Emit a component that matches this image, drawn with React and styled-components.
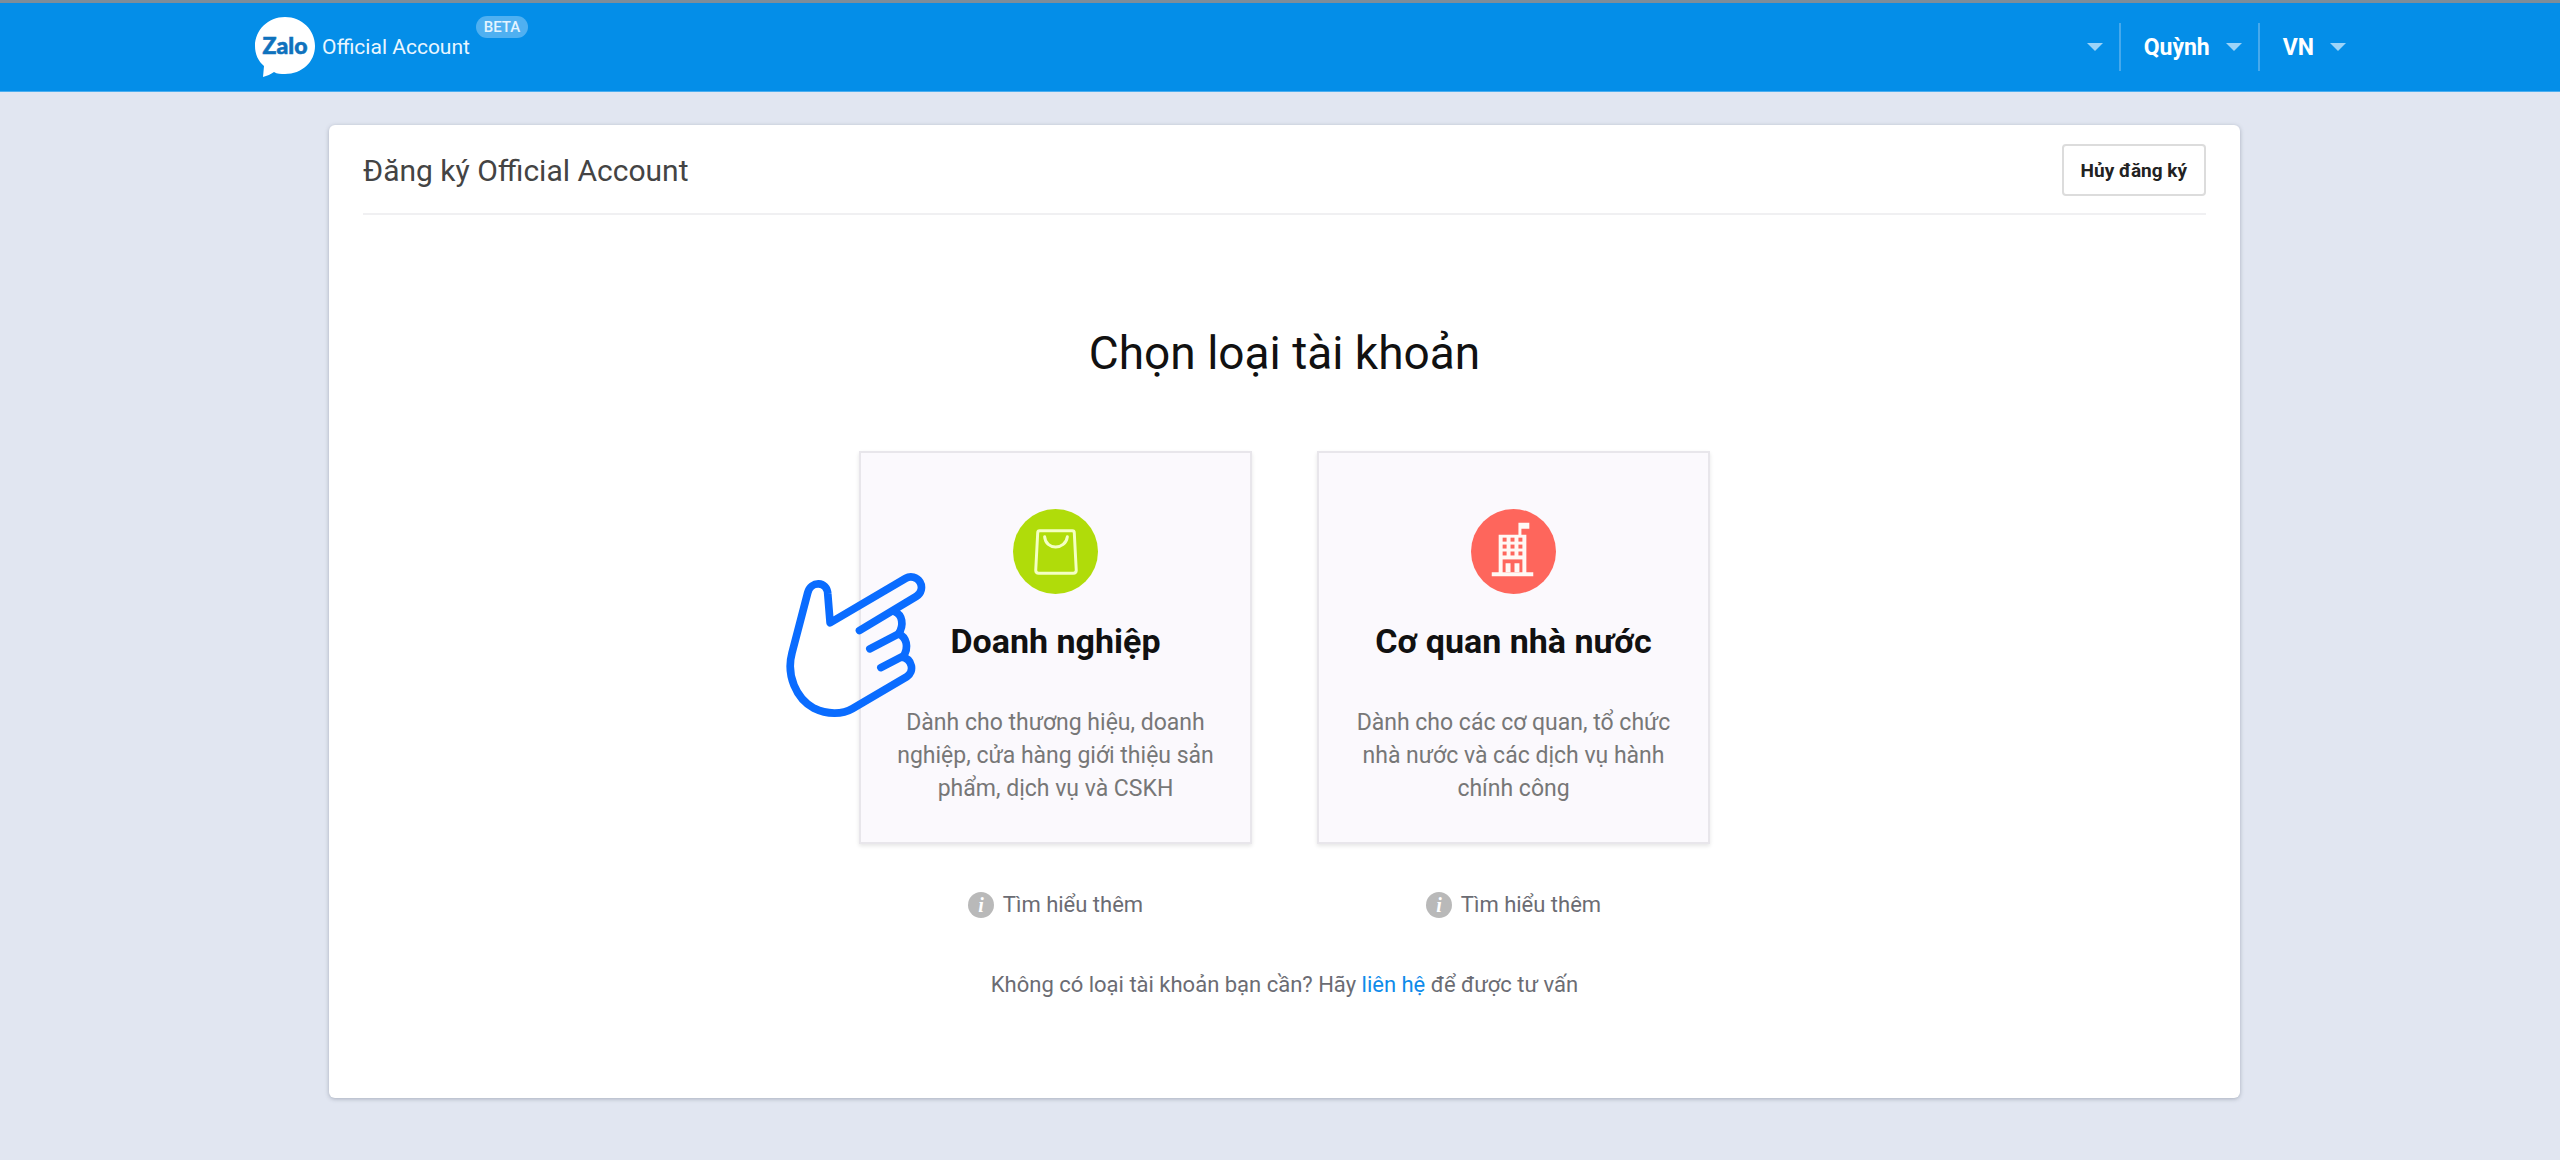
import React from 'react'
import styled, { createGlobalStyle } from 'styled-components'


const GlobalStyle = createGlobalStyle`
    * {
        box-sizing: border-box;
        margin: 0;
        padding: 0;
    }

    body {
        background: #e1e6f1;
        font-family: Roboto, "Noto Sans", sans-serif;
        color: #111;
    }

    button {
        font-family: inherit;
        cursor: pointer;
    }

    a {
        text-decoration: none;
    }
`

const Header = styled.header`
    display: flex;
    align-items: center;
    justify-content: space-between;
    height: 92px;
    padding: 0 214px 0 254px;
    background: #048ee8;
    border-top: 3px solid #7d8d99;
    border-bottom: 1px solid #4aaef0;
`

const Brand = styled.a`
    display: flex;
    align-items: center;
    color: #e9f6ff;
`

const BrandName = styled.span`
    margin-left: 6px;
    font-size: 21px;
    line-height: 32px;
`

const Beta = styled.span`
    align-self: flex-start;
    width: 52px;
    margin-left: 6px;
    border-radius: 11px;
    background: #4fb0f1;
    color: #e4f4ff;
    font-size: 15px;
    font-weight: 500;
    line-height: 22px;
    text-align: center;
`

const Menu = styled.nav`
    display: flex;
    align-items: center;
`

const MenuButton = styled.button`
    display: flex;
    align-items: center;
    gap: 16px;
    height: 48px;
    padding: 0 16px 0 23px;
    border: none;
    border-left: ${({ $first }) => ($first ? 'none' : '2px solid #46a9ec')};
    background: none;
    color: #fff;
    font-size: 23px;
    font-weight: 700;

    &:last-child {
        padding-right: 0;
    }
`

const Caret = styled.span`
    border: 8px solid transparent;
    border-top-color: #9dd4f8;
    border-bottom: none;
`

const Main = styled.main`
    padding: 33px 320px 62px 329px;
`

const Panel = styled.section`
    padding: 0 34px 97px;
    border-radius: 6px;
    background: #fff;
    box-shadow: 0 1px 4px rgba(60, 70, 90, 0.35);
`

const PanelHead = styled.div`
    display: flex;
    align-items: center;
    justify-content: space-between;
    height: 90px;
    padding-top: 2px;
    border-bottom: 2px solid #f0f0f2;
`

const PanelTitle = styled.h1`
    color: #444;
    font-size: 30px;
    font-weight: 400;
`

const CancelButton = styled.button`
    height: 52px;
    padding: 0 17px;
    border: 2px solid #dcdcdc;
    border-radius: 4px;
    background: #fff;
    color: #222;
    font-size: 19px;
    font-weight: 700;
`

const Heading = styled.h2`
    margin-top: 111px;
    font-size: 46px;
    font-weight: 400;
    line-height: 54px;
    text-align: center;
`

const Types = styled.div`
    display: flex;
    justify-content: center;
    gap: 65px;
    margin-top: 71px;
`

const Type = styled.div`
    position: relative;
    display: flex;
    flex-direction: column;
    align-items: center;
    width: 393px;
`

const Card = styled.button`
    display: flex;
    flex-direction: column;
    align-items: center;
    width: 100%;
    height: 393px;
    padding: 56px 30px 0;
    border: 2px solid #e8e6eb;
    background: #fbf9fd;
    box-shadow: 0 2px 4px rgba(0, 0, 0, 0.1);
`

const CardTitle = styled.span`
    margin-top: 27px;
    color: #111;
    font-size: 34px;
    font-weight: 700;
    line-height: 40px;
`

const CardText = styled.span`
    margin-top: 45px;
    color: #777;
    font-size: 23px;
    line-height: 33px;
`

const More = styled.a`
    display: flex;
    align-items: center;
    gap: 9px;
    margin-top: 44px;
    color: #6b6c73;
    font-size: 22px;
    line-height: 33px;
`

const Pointer = styled.svg`
    position: absolute;
    top: 120px;
    left: -74px;
    pointer-events: none;
`

const Contact = styled.p`
    margin-top: 47px;
    color: #6b6c73;
    font-size: 22px;
    line-height: 33px;
    text-align: center;

    a {
        color: #0e8bea;
    }
`

function Logo() {
    return (
        <svg width="62" height="62" viewBox="0 0 62 62">
            <path d="M31 1C14 1 1 14 1 30c0 8 3 15 9 20l-1 11c4-1 8-3 11-5 3 2 7 2 11 2 17 0 30-12 30-28S48 1 31 1z" fill="#fff" />
            <text x="31" y="38" fill="#0f72bd" stroke="#0f72bd" strokeWidth="0.6" fontFamily="Lato, sans-serif" fontWeight="900" fontSize="23" textAnchor="middle">Zalo</text>
        </svg>
    )
}

function BagIcon() {
    return (
        <svg width="85" height="85" viewBox="0 0 86 86">
            <circle cx="43" cy="43" r="43" fill="#b0dc0a" />
            <g fill="none" stroke="#f4ffc4" strokeWidth="3" strokeLinecap="round" strokeLinejoin="round">
                <path d="M27 22h33q2 0 2 2l2 38q0 3-3 3H26q-3 0-3-3l2-38q0-2 2-2z" />
                <path d="M32 28c1 14 21 14 23 0" />
            </g>
        </svg>
    )
}

function BuildingIcon() {
    return (
        <svg width="85" height="85" viewBox="0 0 86 86">
            <circle cx="43" cy="43" r="43" fill="#fe665c" />
            <path d="M28 26h20V14h11v6h-8v6h5v38h7v4H21v-4h7z" fill="#fff8f4" />
            <g fill="#fe665c">
                {[29, 36, 43].map((y) =>
                    [32, 40, 48].map((x) => <rect key={`${x}-${y}`} x={x} y={y} width="4" height="4" />)
                )}
                <path d="M32 51h20v13H32z" />
            </g>
            <path d="M35 55h5v9h-5zM44 55h5v9h-5z" fill="#fff8f4" />
        </svg>
    )
}

function InfoIcon() {
    return (
        <svg width="26" height="26" viewBox="0 0 26 26">
            <circle cx="13" cy="13" r="13" fill="#b9b9b9" />
            <text x="13" y="20" fill="#fff" fontFamily="Liberation Serif, serif" fontStyle="italic" fontWeight="700" fontSize="20" textAnchor="middle">i</text>
        </svg>
    )
}

function Hand() {
    return (
        <Pointer width="142" height="147" viewBox="45 395 425 440" aria-hidden="true">
            <g fill="none" stroke="#0a6cff" strokeWidth="23" strokeLinecap="round" strokeLinejoin="round">
                <path d="M268 573L438 471A30 30 0 0 0 406 417L180 550L173 464C171 424 122 424 113 460L66 640C48 706 78 777 132 806C172 826 218 824 247 807L410 711C432 698 428 658 394 652L332 684" />
                <path d="M374 517C396 526 402 556 385 583L299 628" />
                <path d="M385 583C408 592 418 624 398 652" />
            </g>
        </Pointer>
    )
}

const types = [
    {
        title: 'Doanh nghiệp',
        text: 'Dành cho thương hiệu, doanh nghiệp, cửa hàng giới thiệu sản phẩm, dịch vụ và CSKH',
        Icon: BagIcon,
        pointed: true,
    },
    {
        title: 'Cơ quan nhà nước',
        text: 'Dành cho các cơ quan, tổ chức nhà nước và các dịch vụ hành chính công',
        Icon: BuildingIcon,
    },
]

function App() {
    return (
        <>
            <GlobalStyle />
            <Header>
                <Brand href="#">
                    <Logo />
                    <BrandName>Official Account</BrandName>
                    <Beta>BETA</Beta>
                </Brand>
                <Menu>
                    <MenuButton $first aria-label="Menu"><Caret /></MenuButton>
                    <MenuButton>Quỳnh <Caret /></MenuButton>
                    <MenuButton>VN <Caret /></MenuButton>
                </Menu>
            </Header>
            <Main>
                <Panel>
                    <PanelHead>
                        <PanelTitle>Đăng ký Official Account</PanelTitle>
                        <CancelButton>Hủy đăng ký</CancelButton>
                    </PanelHead>
                    <Heading>Chọn loại tài khoản</Heading>
                    <Types>
                        {types.map(({ title, text, Icon, pointed }) => (
                            <Type key={title}>
                                <Card>
                                    <Icon />
                                    <CardTitle>{title}</CardTitle>
                                    <CardText>{text}</CardText>
                                </Card>
                                {pointed && <Hand />}
                                <More href="#"><InfoIcon /> Tìm hiểu thêm</More>
                            </Type>
                        ))}
                    </Types>
                    <Contact>
                        Không có loại tài khoản bạn cần? Hãy <a href="#">liên hệ</a> để được tư vấn
                    </Contact>
                </Panel>
            </Main>
        </>
    )
}

export default App
